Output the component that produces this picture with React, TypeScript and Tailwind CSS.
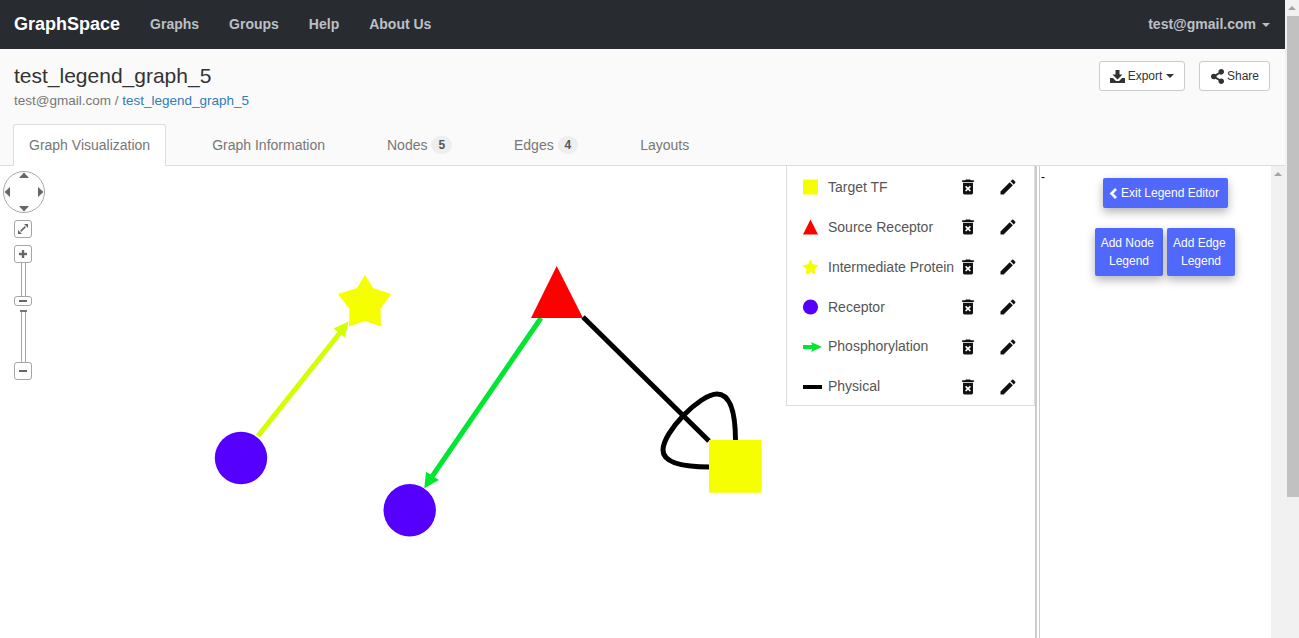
import { FaShareAlt } from "react-icons/fa";
import { MdDeleteForever, MdEdit } from "react-icons/md";

const rows: { label: string; kind: string; up?: boolean }[] = [
  { label: "Target TF", kind: "square" },
  { label: "Source Receptor", kind: "triangle" },
  { label: "Intermediate Protein", kind: "star" },
  { label: "Receptor", kind: "circle" },
  { label: "Phosphorylation", kind: "arrow", up: true },
  { label: "Physical", kind: "line", up: true },
];

function Glyph({ kind }: { kind: string }) {
  return (
    <svg width="26" height="16" viewBox="0 0 26 16" className="shrink-0">
      {kind === "square" && <rect x="1" y="0.5" width="15" height="15" fill="#f5ff00" />}
      {kind === "triangle" && <polygon points="8.5,0.5 16,15.5 1,15.5" fill="#ff0000" />}
      {kind === "star" && (
        <polygon points="8.5,0.5 11,5.3 16.2,6.2 12.5,10.2 13.2,15.5 8.5,13.2 3.8,15.5 4.5,10.2 0.8,6.2 6,5.3" fill="#f5ff00" />
      )}
      {kind === "circle" && <circle cx="8.5" cy="8" r="7.6" fill="#5500ff" />}
      {kind === "arrow" && (
        <g fill="#00e632">
          <rect x="1" y="6" width="12" height="4" />
          <polygon points="20,8 9,3 11,8 9,13" />
        </g>
      )}
      {kind === "line" && <rect x="1" y="6" width="19" height="4" fill="#000" />}
    </svg>
  );
}

function LegendRow({ label, kind, up }: { label: string; kind: string; up?: boolean }) {
  return (
    <div className="flex h-10 items-center pl-[15px]">
      <Glyph kind={kind} />
      <span className={`w-[132px] shrink-0 whitespace-nowrap text-[14px] leading-5 text-[#555] ${up ? "-mt-[2px]" : ""}`}>{label}</span>
      <MdDeleteForever size={20} className="ml-[-2px] shrink-0 text-[#111]" />
      <MdEdit size={20} className="ml-[20px] shrink-0 text-[#111]" />
    </div>
  );
}

function Badge({ n }: { n: number }) {
  return (
    <span className="ml-[4px] flex h-[18px] w-[20.5px] items-center justify-center rounded-full bg-[#eeeeee] text-[12px] font-bold text-[#555]">
      {n}
    </span>
  );
}

function CtrlBox({ children, cls }: { children: React.ReactNode; cls: string }) {
  return (
    <div className={`flex h-[18px] w-[18px] items-center justify-center rounded-[3px] border border-[#a5a5a5] bg-white ${cls}`}>
      {children}
    </div>
  );
}

function Controls() {
  return (
    <div className="absolute left-[3px] top-[5px] flex w-[42px] flex-col items-center">
      <svg width="42" height="42" viewBox="0 0 42 42">
        <circle cx="21" cy="21" r="20.5" fill="#fff" stroke="#a8a8a8" />
        <polygon points="21,1.5 26,7 16,7" fill="#666" />
        <polygon points="21,40.5 26,35 16,35" fill="#666" />
        <polygon points="1.5,21 7,16 7,26" fill="#666" />
        <polygon points="40.5,21 35,16 35,26" fill="#666" />
      </svg>
      <div className="-ml-[2px] flex flex-col items-center">
        <CtrlBox cls="mt-[7px]">
          <svg width="12" height="12" viewBox="0 0 12 12" fill="#666">
            <polygon points="11,1 11,5 7,1" />
            <polygon points="1,11 1,7 5,11" />
            <rect x="5.2" y="2.7" width="1.6" height="6.6" transform="rotate(45 6 6)" />
          </svg>
        </CtrlBox>
        <CtrlBox cls="mt-[7px]">
          <svg width="10" height="10" viewBox="0 0 10 10" fill="#666">
            <rect x="1" y="3.8" width="8" height="2.4" />
            <rect x="3.8" y="1" width="2.4" height="8" />
          </svg>
        </CtrlBox>
        <div className="h-[33px] w-[5px] border-x border-[#a5a5a5]" />
        <CtrlBox cls="!h-[10px]">
          <div className="h-[2px] w-[8px] bg-[#666]" />
        </CtrlBox>
        <div className="mt-[4px] h-[2px] w-[7px] bg-[#777]" />
        <div className="h-[50px] w-[5px] border-x border-[#a5a5a5]" />
        <CtrlBox cls="">
          <div className="h-[2.4px] w-[8px] bg-[#666]" />
        </CtrlBox>
      </div>
    </div>
  );
}

function Graph() {
  return (
    <svg className="absolute inset-0" width="1035" height="472" viewBox="0 166 1035 472">
      <line x1="258" y1="436" x2="343" y2="329" stroke="#d4ff00" strokeWidth="5" />
      <polygon points="348.5,321.5 333.5,328.5 345,337.5" fill="#d4ff00" />
      <line x1="541" y1="318" x2="431" y2="478" stroke="#00e632" strokeWidth="5" />
      <polygon points="424.3,488.3 426,471.7 439,480" fill="#00e632" />
      <line x1="583" y1="317" x2="709" y2="441" stroke="#000" strokeWidth="5" />
      <path d="M735.5 441 C735.5 412 730 394 717 394 C700 394 663 432 663 450 C663 462 680 467 710 467" fill="none" stroke="#000" strokeWidth="5" />
      <circle cx="241" cy="458" r="26.2" fill="#5500ff" />
      <circle cx="409.7" cy="510.3" r="26.2" fill="#5500ff" />
      <polygon points="365,275 373,288 391,294 380.5,309 381,326.5 365,321 349,326.5 349.5,309 338,294 357,288" fill="#f5ff00" />
      <polygon points="556.7,266 583,318 531,318" fill="#ff0000" />
      <rect x="709" y="440" width="52.7" height="52.7" fill="#f5ff00" />
    </svg>
  );
}

function Scrollbar({ thumb }: { thumb: boolean }) {
  return (
    <div className="flex w-[14px] shrink-0 flex-col items-center bg-[#f1f1f1]">
      <div className="flex h-[16px] w-full shrink-0 items-center justify-center">
        <div className="h-0 w-0 border-x-[4px] border-b-[4px] border-x-transparent border-b-[#a3a3a3]" />
      </div>
      {thumb && <div className="ml-[2px] h-[481px] w-[12px] bg-[#c1c1c1]" />}
    </div>
  );
}

export default function App() {
  return (
    <div className="flex h-[638px] w-[1299px] overflow-hidden bg-white font-['Liberation_Sans',sans-serif] text-[14px]">
      <div className="flex w-[1285px] shrink-0 flex-col">
        <nav className="flex h-[49px] shrink-0 items-center bg-[#282b30] pl-[14px] pr-[15px] font-bold text-[#bcc0c6]">
          <span className="text-[18px] text-white">GraphSpace</span>
          <div className="ml-[30px] flex gap-[30px]">
            <span>Graphs</span>
            <span>Groups</span>
            <span>Help</span>
            <span>About Us</span>
          </div>
          <span className="ml-auto">test@gmail.com</span>
          <span className="ml-[6px] h-0 w-0 border-x-[4px] border-t-[4px] border-x-transparent border-t-[#bcc0c6]" />
        </nav>

        <header className="flex h-[117px] shrink-0 flex-col border-b border-[#dddddd] bg-[#fafafa]">
          <div className="flex flex-1 justify-between pl-[14px] pr-[15px]">
            <div className="pt-[14px]">
              <h1 className="text-[21px] leading-[25px] text-[#333]">test_legend_graph_5</h1>
              <div className="mt-[4px] text-[13.5px] leading-[18px] text-[#777]">
                test@gmail.com / <span className="text-[#337ab7]">test_legend_graph_5</span>
              </div>
            </div>
            <div className="flex gap-[14px] pt-[12px]">
              <button className="flex h-[30px] w-[86px] items-center justify-center rounded-[3px] border border-[#cccccc] bg-white text-[12px] text-[#333]">
                <svg width="15" height="13" viewBox="0 0 15 13" fill="#333" className="mr-[3px]">
                  <polygon points="5.5,0 9.5,0 9.5,4.5 12.5,4.5 7.5,9.5 2.5,4.5 5.5,4.5" />
                  <path d="M0 8h3l3 3h3l3-3h3v5H0z" />
                </svg>
                Export
                <span className="ml-[4px] h-0 w-0 border-x-[4px] border-t-[4px] border-x-transparent border-t-[#333]" />
              </button>
              <button className="flex h-[30px] w-[71px] items-center justify-center rounded-[3px] border border-[#cccccc] bg-white text-[12px] text-[#333]">
                <FaShareAlt size={15} className="mr-[2px]" />
                Share
              </button>
            </div>
          </div>
          <div className="-mb-px flex gap-[30px] pl-[13px]">
            <div className="flex h-[42px] items-center rounded-t-[3px] border border-b-white border-[#dddddd] bg-white px-[15px] text-[#777]">
              Graph Visualization
            </div>
            {[
              ["Graph Information"],
              ["Nodes", 5],
              ["Edges", 4],
              ["Layouts"],
            ].map(([t, n]) => (
              <div key={t as string} className="flex h-[42px] items-center px-[16px] text-[#777]">
                {t}
                {n !== undefined && <Badge n={n as number} />}
              </div>
            ))}
          </div>
        </header>

        <div className="flex min-h-0 flex-1">
          <div className="relative w-[1035px] shrink-0 overflow-hidden">
            <Graph />
            <Controls />
            <div className="absolute right-0 top-0 h-[240px] w-[249px] border-x border-b border-[#dddddd] bg-white pt-[1px]">
              {rows.map((r) => (
                <LegendRow key={r.label} label={r.label} kind={r.kind} up={r.up} />
              ))}
            </div>
          </div>
          <div className="w-[2px] shrink-0 bg-[#cccccc]" />
          <div className="w-[2px] shrink-0" />
          <div className="w-px shrink-0 bg-[#cccccc]" />
          <div className="flex flex-1 flex-col items-center pt-[12px] pl-[19px]">
            <div className="-ml-[18px] h-0 -translate-y-[8px] self-start text-[12px] leading-[14px] text-black">-</div>
            <button className="flex h-[30px] w-[125px] items-center justify-center rounded-[2px] bg-[#5068fc] pr-[2px] text-[12px] text-white shadow-[0_4px_10px_rgba(0,0,0,0.3)]">
              <svg width="9" height="11" viewBox="0 0 9 11" className="mr-[3px]">
                <polyline points="7,1 2.5,5.5 7,10" fill="none" stroke="#fff" strokeWidth="2.6" />
              </svg>
              Exit Legend Editor
            </button>
            <div className="mt-[20px] flex gap-[4px]">
              <button className="h-[48px] w-[68px] rounded-[2px] bg-[#5068fc] text-[12px] leading-[18px] text-white shadow-[0_4px_10px_rgba(0,0,0,0.3)]">
                Add Node{"\u00a0"}
                <br />
                Legend
              </button>
              <button className="h-[48px] w-[68px] rounded-[2px] bg-[#5068fc] text-[12px] leading-[18px] text-white shadow-[0_4px_10px_rgba(0,0,0,0.3)]">
                Add Edge{"\u00a0"}
                <br />
                Legend
              </button>
            </div>
          </div>
          <Scrollbar thumb={false} />
        </div>
      </div>
      <Scrollbar thumb={true} />
    </div>
  );
}
